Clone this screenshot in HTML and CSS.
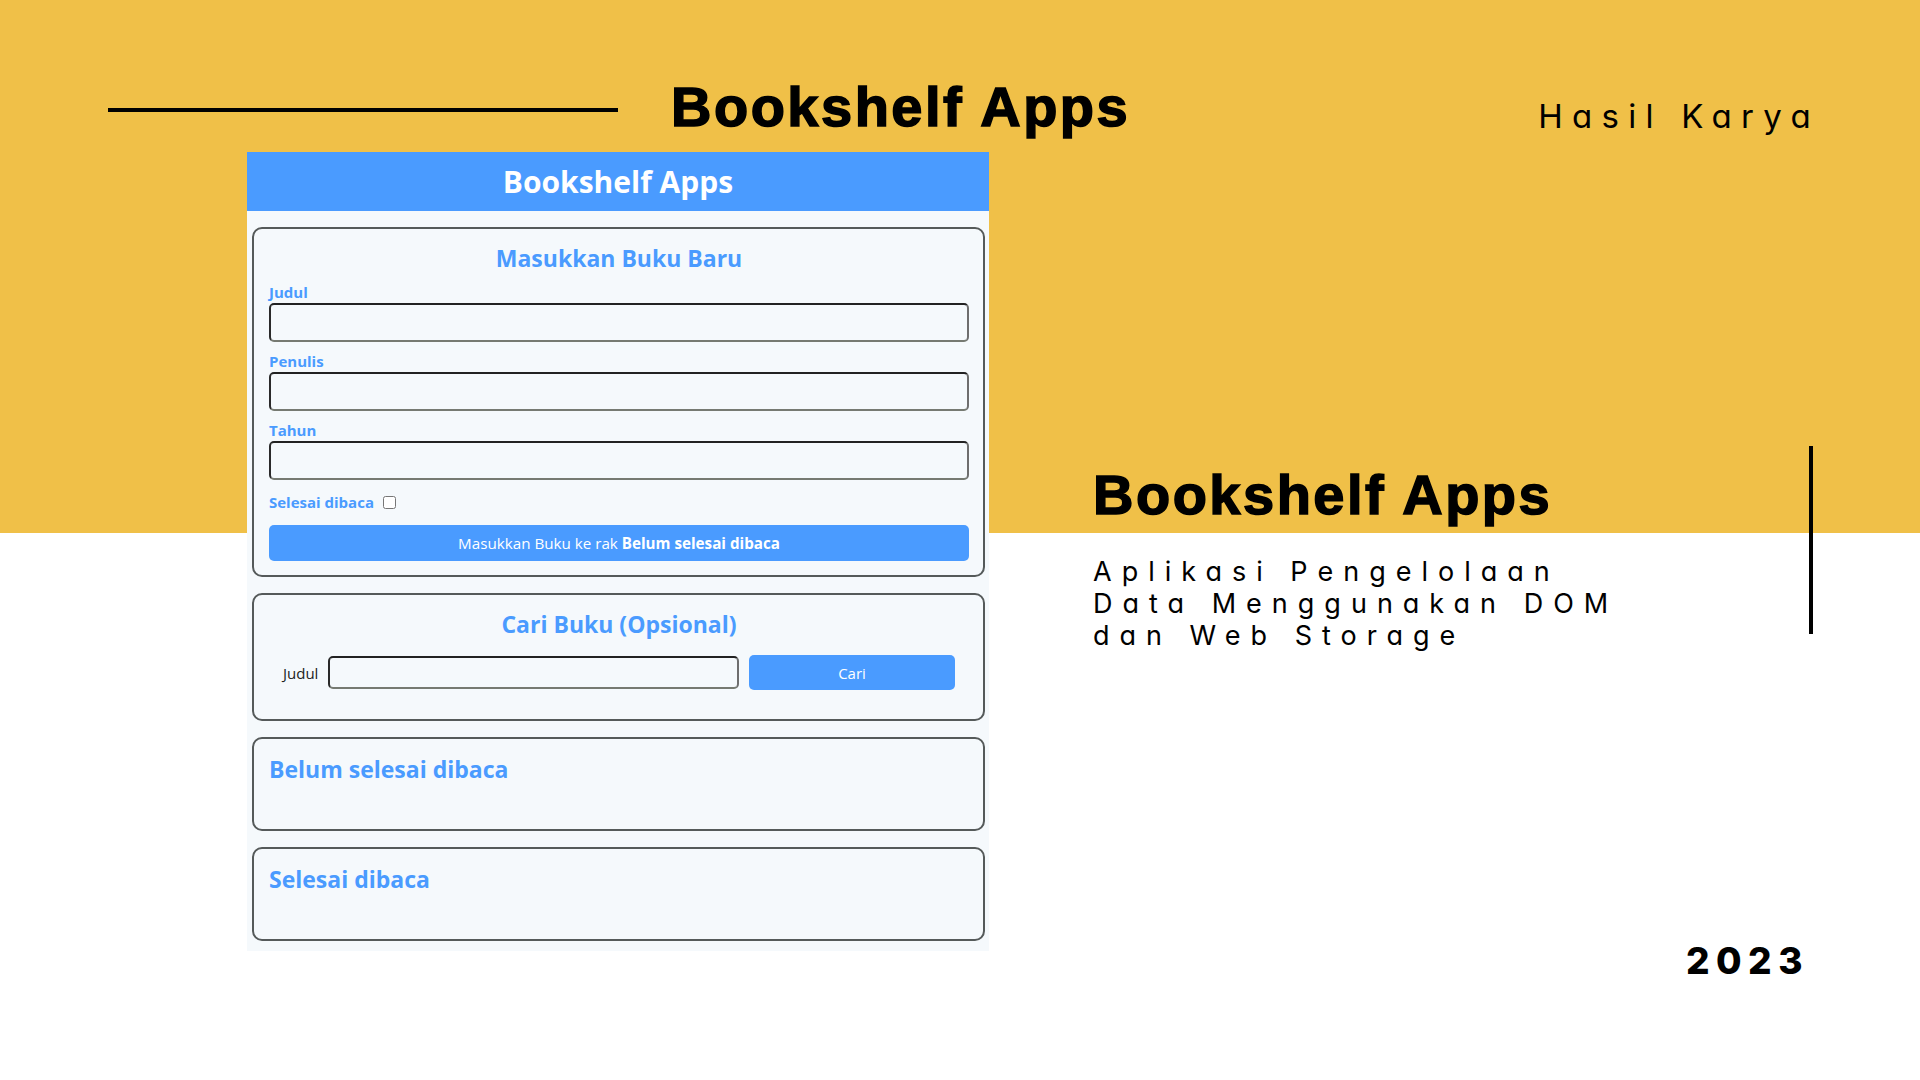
FILE: index.html
```html
<!DOCTYPE html>
<html lang="en">
<head>
    <meta charset="UTF-8">
    <meta name="viewport" content="width=device-width, initial-scale=1.0">
    <title>Bookshelf Apps - Hasil Karya</title>
    <link rel="stylesheet" href="styles.css">
</head>
<body>
<div class="slide">
    <!-- top strip -->
    <header class="top">
        <div class="rule"></div>
        <h1 class="title top-title">Bookshelf Apps</h1>
        <p class="tag">Hasil Karya</p>
    </header>

    <main class="main">
        <!-- app screenshot -->
        <section class="app">
            <div class="app-head">Bookshelf Apps</div>
            <div class="app-body">
                <div class="card">
                    <h2 class="card-title center">Masukkan Buku Baru</h2>
                    <div class="field">
                        <label>Judul</label>
                        <input type="text">
                    </div>
                    <div class="field">
                        <label>Penulis</label>
                        <input type="text">
                    </div>
                    <div class="field">
                        <label>Tahun</label>
                        <input type="text">
                    </div>
                    <div class="check">
                        <label>Selesai dibaca</label>
                        <input type="checkbox">
                    </div>
                    <button class="btn btn-wide">Masukkan Buku ke rak <b>Belum selesai dibaca</b></button>
                </div>

                <div class="card">
                    <h2 class="card-title center">Cari Buku (Opsional)</h2>
                    <div class="search-row">
                        <label>Judul</label>
                        <input type="text">
                        <button class="btn btn-search">Cari</button>
                    </div>
                </div>

                <div class="card shelf">
                    <h2 class="card-title">Belum selesai dibaca</h2>
                </div>

                <div class="card shelf">
                    <h2 class="card-title">Selesai dibaca</h2>
                </div>
            </div>
        </section>

        <!-- description -->
        <aside class="side">
            <div class="intro-row">
                <div class="intro">
                    <h2 class="title">Bookshelf Apps</h2>
                    <p class="subtitle">Aplikasi Pengelolaan<br>Data Menggunakan DOM<br>dan Web Storage</p>
                </div>
                <div class="bar"></div>
            </div>
            <p class="year">2023</p>
        </aside>
    </main>
</div>
</body>
</html>
```
FILE: styles.css
```css
/* slide */

body {
    margin: 0;
    overflow: hidden;
}
.slide {
    width: 1920px;
    height: 1080px;
    background: linear-gradient(to bottom, #f0c048 0, #f0c048 533px, #ffffff 533px);
    color: #000;
}

/* top strip */
.top {
    display: flex;
    align-items: flex-start;
    height: 152px;
    padding-right: 100px;
    box-sizing: border-box;
}
.rule {
    width: 510px;
    height: 4px;
    margin: 108px 0 0 108px;
    background-color: #000;
}
.title {
    margin: 0;
    font-family: 'Liberation Sans', Arial, sans-serif;
    font-weight: 700;
    font-size: 56px;
    line-height: 1;
    letter-spacing: 2.5px;
    -webkit-text-stroke: 1.5px #000;
    white-space: nowrap;
}
.top-title {
    margin: 79px 0 0 53px;
}
.tag {
    margin: 100px 0 0 auto;
    font-family: Inter, 'Noto Sans', sans-serif;
    font-feature-settings: "cv11" 1;
    font-weight: 400;
    font-size: 33px;
    line-height: 1;
    letter-spacing: 9.3px;
}

/* main area */
.main {
    display: flex;
    align-items: flex-start;
}

/* app screenshot */
.app {
    width: 742px;
    margin-left: 247px;
    background-color: #f5f9fc;
    font-family: 'Open Sans', 'Noto Sans', sans-serif;
}
.app-head {
    height: 59px;
    display: flex;
    align-items: center;
    justify-content: center;
    background-color: #4a9bff;
    color: #fff;
    font-weight: 700;
    font-size: 30px;
}
.app-body {
    padding: 16px 4px 10px 5px;
}
.card {
    border: 2px solid #555a5a;
    border-radius: 10px;
    padding: 14px 14px 14px 15px;
    margin-bottom: 16px;
}
.card:last-child {
    margin-bottom: 0;
}
.card-title {
    margin: 0;
    font-size: 23px;
    line-height: 31px;
    font-weight: 700;
    color: #4a9bff;
}
.center {
    text-align: center;
}
.field label {
    display: block;
    margin: 8px 0 1px 0;
    font-size: 15px;
    line-height: 20px;
    font-weight: 700;
    color: #4a9bff;
}
.field + .field label {
    margin-top: 9px;
}
.field input,
.search-row input {
    display: block;
    width: 100%;
    height: 39px;
    box-sizing: border-box;
    border: 2px solid;
    border-color: #222 #6e6e6e #767a72 #2a2a2a;
    border-radius: 5px;
    background: transparent;
}
.check {
    display: flex;
    align-items: center;
    height: 20px;
    margin-top: 12px;
}
.check label {
    font-size: 15px;
    line-height: 20px;
    font-weight: 700;
    color: #4a9bff;
}
.check input {
    width: 13px;
    height: 13px;
    margin: 0 0 0 9px;
}
.btn {
    border: none;
    border-radius: 5px;
    background-color: #4a9bff;
    color: #fff;
    font-family: 'Open Sans', 'Noto Sans', sans-serif;
    font-size: 15px;
    padding: 0;
}
.btn-wide {
    display: block;
    width: 100%;
    height: 36px;
    margin-top: 13px;
    font-size: 15.2px;
}
.search-row {
    display: flex;
    align-items: center;
    gap: 10px;
    padding: 0 14px;
    margin: 15px 0;
}
.search-row label {
    font-size: 15px;
    color: #222;
}
.search-row input {
    flex: 1;
    height: 33px;
}
.btn-search {
    width: 206px;
    height: 35px;
}
.shelf {
    padding-top: 15px;
    padding-bottom: 44px;
}

/* description */
.side {
    width: 720px;
    margin-left: 104px;
}
.intro-row {
    display: flex;
    justify-content: space-between;
    align-items: flex-start;
    margin-top: 294px;
}
.intro {
    margin-top: 21px;
}
.subtitle {
    margin: 33px 0 0 0;
    font-family: Inter, 'Noto Sans', sans-serif;
    font-feature-settings: "cv11" 1;
    font-size: 27px;
    line-height: 32px;
    letter-spacing: 10px;
    white-space: nowrap;
}
.bar {
    width: 4px;
    height: 188px;
    background-color: #000;
}
.year {
    margin: 290px 0 0 0;
    padding-right: 4px;
    text-align: right;
    font-family: Inter, 'Noto Sans', sans-serif;
    font-weight: 800;
    font-size: 37px;
    line-height: 1;
    letter-spacing: 6.5px;
}
```
